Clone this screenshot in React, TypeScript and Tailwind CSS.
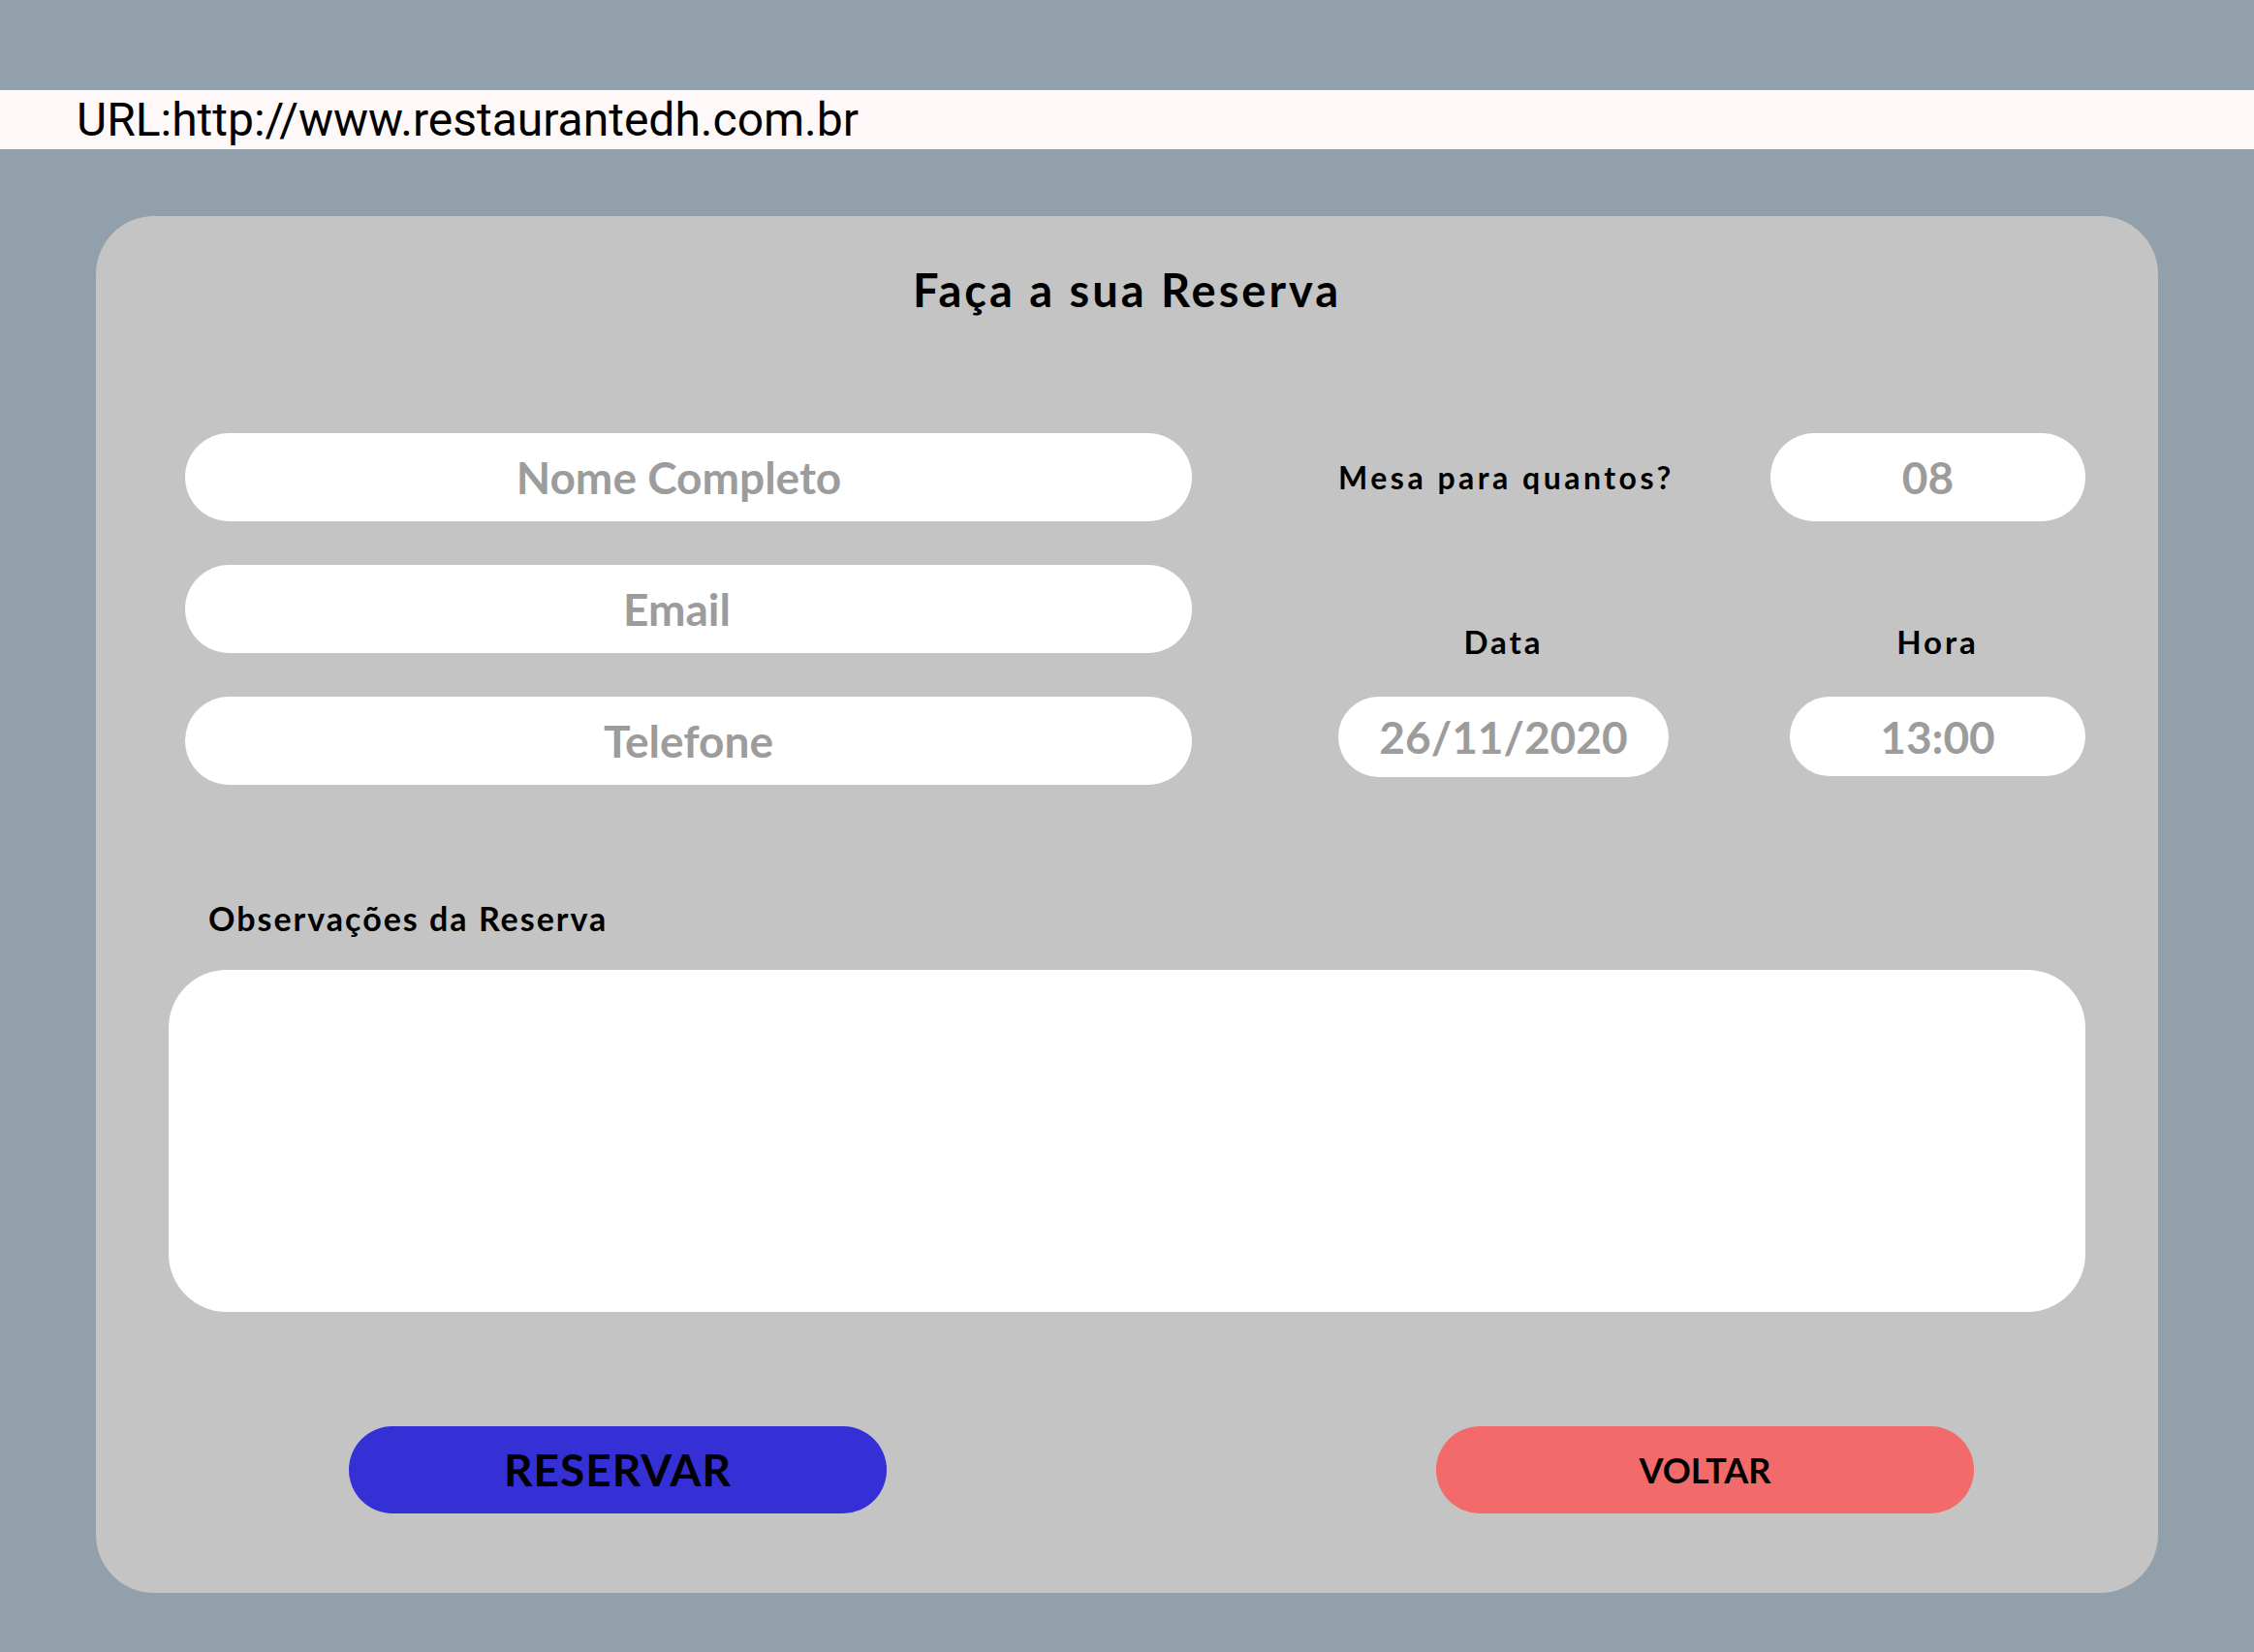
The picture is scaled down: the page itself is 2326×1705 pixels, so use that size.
import React from "react";

function PillInput({
  placeholder,
  className,
}: {
  placeholder: string;
  className: string;
}) {
  return (
    <input
      type="text"
      placeholder={placeholder}
      className={`block bg-white rounded-full text-center font-bold text-black outline-none placeholder:text-[#9c9c9c] font-['Lato',sans-serif] ${className}`}
    />
  );
}

export default function App() {
  return (
    <div className="w-[2326px] h-[1705px] bg-[#91a0aa] pt-[93px] font-['Lato',sans-serif] text-black overflow-hidden">
      {/* barra de endereço */}
      <div className="h-[61px] bg-[#fff8f8] flex items-center pl-[79px]">
        <span className="font-['Roboto',sans-serif] text-[48px] leading-none">
          URL:http://www.restaurantedh.com.br
        </span>
      </div>

      <div className="mt-[69px] ml-[99px] w-[2128px] h-[1421px] rounded-[60px] bg-[#c4c4c4] pt-[53px]">
        <h1 className="text-center text-[47px] leading-none font-bold tracking-[3px]">Faça a sua Reserva</h1>

        <div className="mt-[124px] flex">
          <div className="ml-[92px] w-[1039px] flex flex-col gap-[45px]">
            <PillInput placeholder="Nome Completo" className="w-full h-[91px] text-[46px] pr-[20px]" />
            <PillInput placeholder="Email" className="w-full h-[91px] text-[46px] pr-[24px]" />
            <PillInput placeholder="Telefone" className="w-full h-[91px] text-[46px]" />
          </div>

          <div className="ml-[151px] w-[771px] flex flex-col">
            <div className="h-[91px] flex items-center justify-between">
              <span className="text-[32px] leading-none font-bold tracking-[3.5px]">Mesa para quantos?</span>
              <PillInput placeholder="08" className="w-[325px] h-[91px] text-[46px]" />
            </div>
            <div className="mt-[108px] flex justify-between">
              <div className="w-[341px] flex flex-col items-center">
                <span className="text-[33px] leading-none font-bold tracking-[3px]">Data</span>
                <PillInput placeholder="26/11/2020" className="mt-[40px] w-[341px] h-[83px] text-[46px]" />
              </div>
              <div className="w-[305px] flex flex-col items-center">
                <span className="text-[33px] leading-none font-bold tracking-[3px]">Hora</span>
                <PillInput placeholder="13:00" className="mt-[40px] w-[305px] h-[82px] text-[46px]" />
              </div>
            </div>
          </div>
        </div>

        <div className="mt-[121px] ml-[116px] text-[34px] leading-none font-bold tracking-[2px]">
          Observações da Reserva
        </div>
        <textarea className="block mt-[36px] ml-[75px] w-[1978px] h-[353px] rounded-[60px] bg-white resize-none outline-none p-8 text-[32px]" />

        <div className="mt-[118px] ml-[261px] flex gap-[567px]">
          <button className="w-[555px] h-[90px] rounded-full bg-[#3430d6] text-[46px] font-bold leading-none uppercase tracking-[1px]">
            Reservar
          </button>
          <button className="w-[555px] h-[90px] rounded-full bg-[#f36a6b] text-[36px] font-bold leading-none uppercase">
            Voltar
          </button>
        </div>
      </div>
    </div>
  );
}
